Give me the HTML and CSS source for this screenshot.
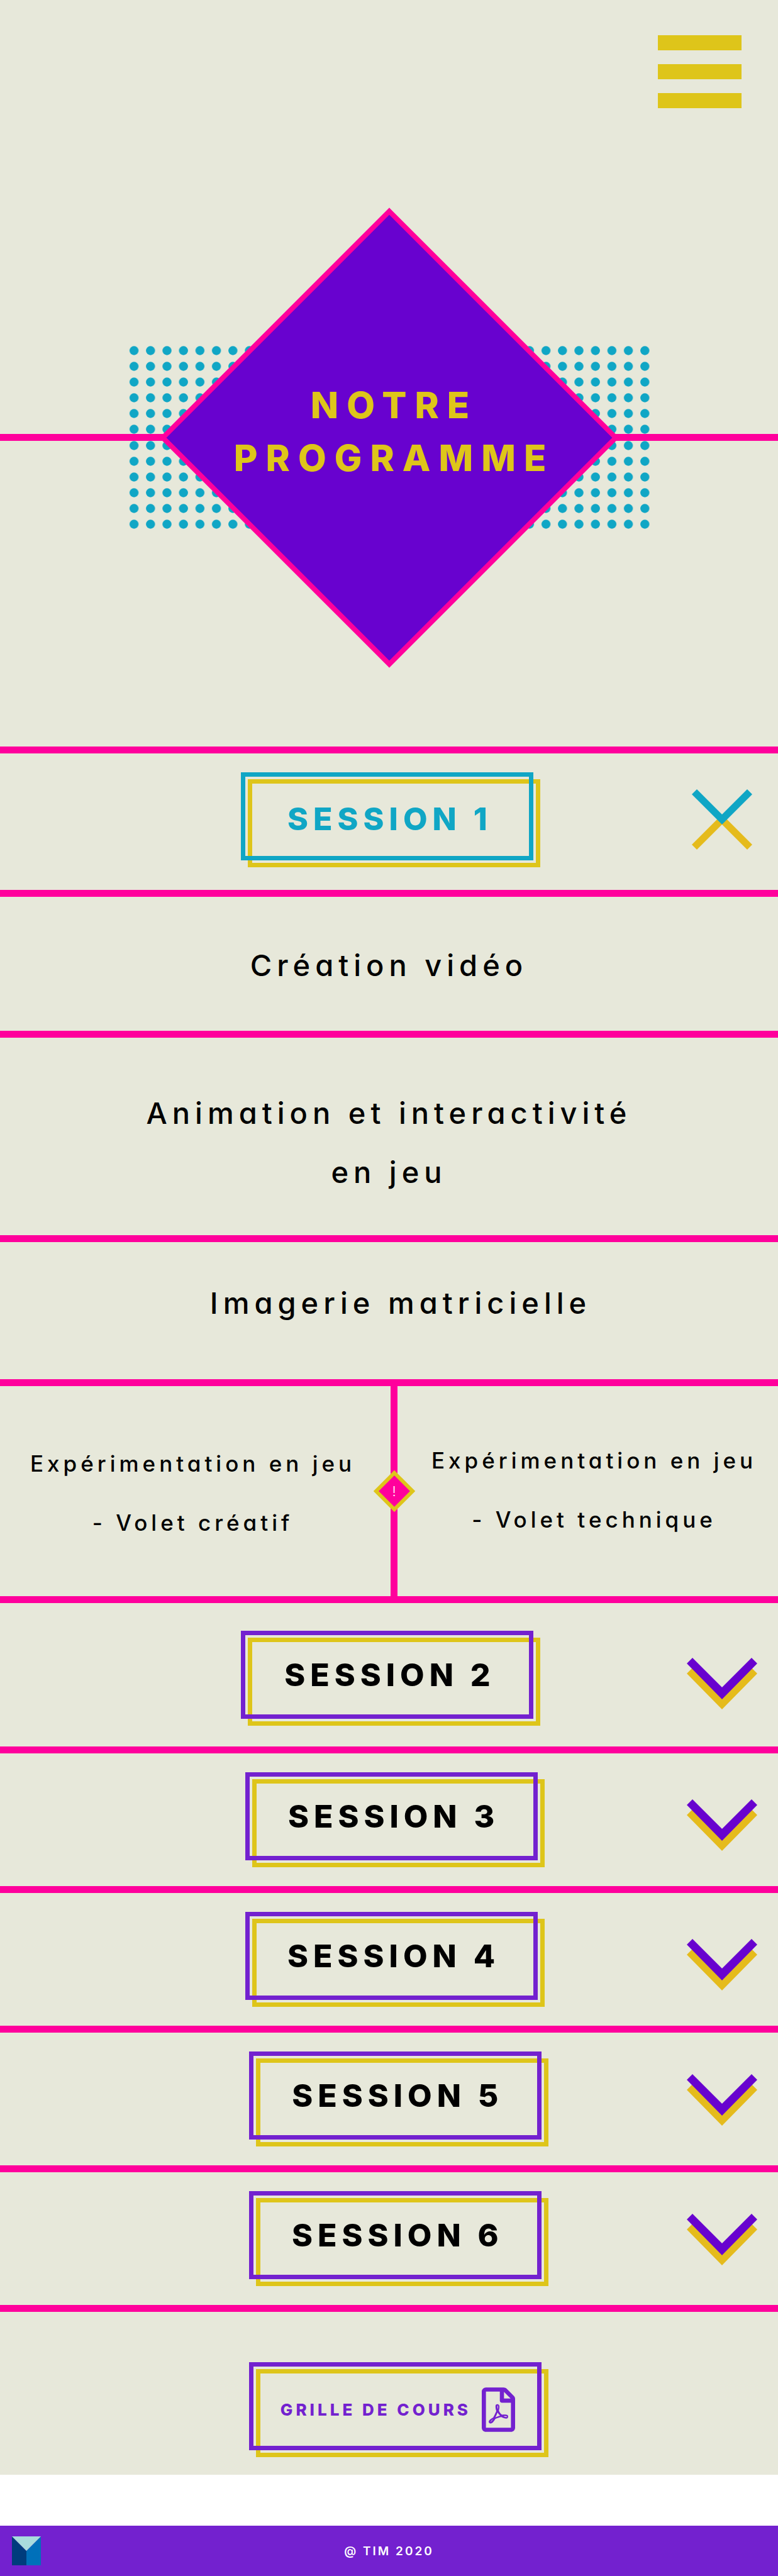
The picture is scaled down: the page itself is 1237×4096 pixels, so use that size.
FILE: index.html
```html
<!DOCTYPE html>
<html lang="fr">
<head>
<meta charset="utf-8">
<meta name="viewport" content="width=device-width, initial-scale=1">
<title>TIM - Notre programme</title>
<link rel="stylesheet" href="styles.css">
</head>
<body>
<svg class="defs" aria-hidden="true">
  <symbol id="chevron" viewBox="0 0 112 82">
    <path fill="#e5bb1c" d="M9 16 56 63 103 16 112 25 56 82 0 25Z"/>
    <path fill="#6802cf" d="M9 0 56 47 103 0 112 9 56 66 0 9Z"/>
  </symbol>
</svg>

<main class="page">
  <header class="topbar">
    <button class="menu" type="button" aria-label="Menu"><span class="bar"></span><span class="bar"></span><span class="bar"></span></button>
  </header>

  <section class="hero">
    <svg class="hero-art" viewBox="0 0 828 732" aria-hidden="true">
      <defs>
        <pattern id="dots" width="26.2" height="25" patternUnits="userSpaceOnUse">
          <circle cx="13.1" cy="12.5" r="7.2" fill="#10a6c5"/>
        </pattern>
      </defs>
      <g transform="translate(-5 215)"><rect width="839" height="150" fill="url(#dots)"/></g>
      <g transform="translate(-5 366)"><rect width="839" height="150" fill="url(#dots)"/></g>
      <rect y="360" width="828" height="11" fill="#ff009c"/>
      <path d="M414 6 774 366 414 726 54 366Z" fill="#6802cf" stroke="#ff009c" stroke-width="8"/>
    </svg>
    <h1 class="hero-title">NOTRE<br>PROGRAMME</h1>
  </section>

  <section class="session session-first open">
    <h2><button class="box" type="button" aria-expanded="true">SESSION 1</button></h2>
    <button class="toggle" type="button" aria-label="Fermer la session 1">
      <svg width="112" height="96" viewBox="0 0 112 96">
        <path fill="#e5bb1c" d="M56 40 104 88 96 96 56 56 16 96 8 88Z"/>
        <path fill="#10a6c5" d="M16 0 56 40 96 0 104 8 56 56 8 8Z"/>
      </svg>
    </button>
  </section>

  <ul class="courses">
    <li class="course course-video"><a href="#creation-video">Création vidéo</a></li>
    <li class="course course-animation"><a href="#animation">Animation et interactivité en&nbsp;jeu</a></li>
    <li class="course course-imagerie"><a href="#imagerie">Imagerie matricielle</a></li>
    <li class="course-split">
      <a class="half half-left" href="#volet-creatif">Expérimentation en jeu<br>- Volet créatif</a>
      <div class="divider">
        <button class="notice" type="button" aria-label="Information">
          <svg width="68" height="68" viewBox="0 0 68 68"><path d="M34 5 63 34 34 63 5 34Z" fill="#ff009c" stroke="#dec51a" stroke-width="6"/></svg>
          <span>!</span>
        </button>
      </div>
      <a class="half half-right" href="#volet-technique">Expérimentation en jeu<br>- Volet technique</a>
    </li>
  </ul>

  <section class="session session-second">
    <h2><button class="box" type="button" aria-expanded="false">SESSION 2</button></h2>
    <button class="toggle" type="button" aria-label="Ouvrir la session 2"><svg width="112" height="82"><use href="#chevron"/></svg></button>
  </section>
  <section class="session session-mid">
    <h2><button class="box" type="button" aria-expanded="false">SESSION 3</button></h2>
    <button class="toggle" type="button" aria-label="Ouvrir la session 3"><svg width="112" height="82"><use href="#chevron"/></svg></button>
  </section>
  <section class="session session-mid">
    <h2><button class="box" type="button" aria-expanded="false">SESSION 4</button></h2>
    <button class="toggle" type="button" aria-label="Ouvrir la session 4"><svg width="112" height="82"><use href="#chevron"/></svg></button>
  </section>
  <section class="session session-late">
    <h2><button class="box" type="button" aria-expanded="false">SESSION 5</button></h2>
    <button class="toggle" type="button" aria-label="Ouvrir la session 5"><svg width="112" height="82"><use href="#chevron"/></svg></button>
  </section>
  <section class="session session-late">
    <h2><button class="box" type="button" aria-expanded="false">SESSION 6</button></h2>
    <button class="toggle" type="button" aria-label="Ouvrir la session 6"><svg width="112" height="82"><use href="#chevron"/></svg></button>
  </section>

  <section class="session session-late download">
    <a class="box box-download" href="#grille-de-cours">GRILLE DE COURS
      <svg width="53" height="71" viewBox="0 0 384 512" aria-hidden="true"><path fill="#7321cf" d="M369.900 97.900L286 14C277 5 264.800 0 252.100 0H48C21.500 0 0 21.500 0 48v416c0 26.500 21.500 48 48 48h288c26.500 0 48-21.500 48-48V131.900c0-12.700-5.100-25-14.100-34zM332.100 128H256V51.900l76.100 76.100zM48 464V48h160v104c0 13.300 10.700 24 24 24h104v288H48zm250.200-143.700c-12.200-12-47-8.700-64.400-6.500-17.200-10.500-28.700-25-36.800-46.300 3.900-16.100 10.100-40.600 5.400-56-4.200-26.200-37.800-23.600-42.600-5.900-4.400 16.100-.4 38.500 7 67.100-10 23.900-24.900 56-35.400 74.400-20 10.300-47 26.200-51 46.200-3.300 15.800 26 55.200 76.100-31.200 22.400-7.400 46.800-16.500 68.400-20.100 18.900 10.200 41 17 55.800 17 25.500 0 28-28.200 17.500-38.700zm-198.100 77.800c5.100-13.700 24.500-29.500 30.400-35-19 30.300-30.400 35.700-30.400 35zm81.600-190.600c7.400 0 6.700 32.100 1.800 40.800-4.400-13.900-4.300-40.800-1.800-40.800zm-24.400 136.600c9.700-16.900 18-37 24.700-54.700 8.300 15.100 18.900 27.200 30.100 35.500-20.800 4.300-38.900 13.100-54.800 19.200zm131.600-5s-5 6-37.300-7.800c35.100-2.600 40.900 5.400 37.300 7.800z"/></svg>
    </a>
  </section>
</main>

<footer class="footer">
  <svg class="logo" width="46" height="46" viewBox="0 0 46 46" role="img" aria-label="TIM">
    <path fill="#003c7d" d="M0 0 23 23V46H0Z"/>
    <path fill="#0070ba" d="M46 0 23 23V46H46Z"/>
    <path fill="#a8dcdd" d="M0 0H46L23 23Z"/>
  </svg>
  <p>@ TIM 2020</p>
</footer>
</body>
</html>
```

FILE: styles.css
```css
:root {
  --paper: #e7e8da;
  --pink: #ff009c;
  --violet: #7321cf;
  --yellow: #dec51a;
  --cyan: #10a6c5;
}

* { box-sizing: border-box; }

body {
  margin: 0;
  background: #fff;
  color: #000;
  font-family: Inter, "Liberation Sans", sans-serif;
}

h1, h2, p, ul { margin: 0; padding: 0; }
ul { list-style: none; }
a { color: inherit; text-decoration: none; }
svg { display: block; }

button {
  border: 0;
  padding: 0;
  background: none;
  color: inherit;
  font: inherit;
  cursor: pointer;
}

.defs { display: none; }
.page { background: var(--paper); }

/* Header */
.topbar {
  display: flex;
  justify-content: flex-end;
  padding: 56px 58px 0;
}
.menu {
  display: flex;
  flex-direction: column;
  gap: 22px;
  width: 133px;
}
.bar { height: 24px; background: var(--yellow); }

/* Hero */
.hero {
  display: grid;
  place-items: center;
  margin-bottom: 125px;
  padding-top: 158px;
  background: linear-gradient(var(--pink), var(--pink)) 0 518px / 100% 11px no-repeat;
}
.hero-art, .hero-title { grid-area: 1 / 1; }
.hero-art { width: 828px; max-width: 100%; }
.hero-title {
  padding: 0 0 21px 16px;
  color: var(--yellow);
  font-size: 58px;
  font-weight: 800;
  line-height: 84px;
  letter-spacing: 13px;
  text-align: center;
}

/* Session rows */
.session {
  display: flex;
  align-items: center;
  justify-content: space-between;
  border-top: 11px solid var(--pink);
  padding: 30px 33px 41px 31%;
}
.session-first { padding-bottom: 47px; }
.session-second { padding-top: 44px; padding-bottom: 44px; }
.session-mid { padding-left: 31.5%; }
.session-late { padding-left: 32%; }

.box {
  position: relative;
  display: flex;
  align-items: center;
  justify-content: center;
  width: 465px;
  height: 140px;
  padding-left: 8px;
  border: 7px solid var(--violet);
  font-size: 50px;
  font-weight: 800;
  letter-spacing: 8px;
  isolation: isolate;
}
.box::before {
  content: "";
  position: absolute;
  z-index: -1;
  inset: 4px -18px -18px 4px;
  border: 7px solid var(--yellow);
}
.box::after {
  content: "";
  position: absolute;
  z-index: -1;
  inset: -7px;
  border: 7px solid var(--violet);
}
.open .box, .open .box::after { border-color: var(--cyan); }
.open .box { padding-top: 8px; color: var(--cyan); }

.toggle { padding-top: 28px; }
.session-late .toggle { padding-top: 14px; }
.open .toggle { padding-top: 10px; }

/* Course list */
.course {
  border-top: 11px solid var(--pink);
  font-size: 47px;
  font-weight: 500;
  font-feature-settings: "cv11";
  line-height: 94px;
  letter-spacing: 8px;
  text-align: center;
}
.course-video { padding: 62px 200px 57px; }
.course-animation { padding: 73px 200px 53px; }
.course-imagerie { padding: 50px 0 74px 3%; }

.course-split {
  display: grid;
  grid-template-columns: 621fr 11px 605fr;
  border-top: 11px solid var(--pink);
}
.half {
  font-size: 35px;
  font-weight: 500;
  font-feature-settings: "cv11";
  line-height: 94px;
  letter-spacing: 6px;
  text-align: center;
}
.half-left { padding: 76px 8px 70px 0; }
.half-right { padding: 71px 0 75px 20px; }

.divider {
  display: grid;
  place-content: center;
  background: var(--pink);
}
.notice {
  display: grid;
  place-items: center;
  width: 68px;
  height: 68px;
  color: #fff;
  font-size: 22px;
  font-weight: 300;
}
.notice > * { grid-area: 1 / 1; }

/* Download row */
.download { padding-top: 80px; padding-bottom: 39px; }
.box-download {
  justify-content: space-between;
  padding: 10px 35px 0 43px;
  color: var(--violet);
  font-size: 26px;
  letter-spacing: 5px;
}

/* Footer */
.footer {
  display: grid;
  grid-template-columns: 1fr auto 1fr;
  align-items: center;
  margin-top: 81px;
  padding: 17px 19px;
  background: var(--violet);
  color: #fff;
  font-size: 19px;
  font-weight: 600;
  letter-spacing: 3px;
}
```
